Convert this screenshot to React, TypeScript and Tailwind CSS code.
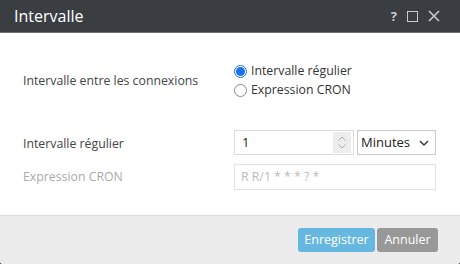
import React from "react";

export default function App() {
  return (
    <div
      className="w-[460px] h-[264px] bg-[#2f3236] flex flex-col overflow-hidden"
      style={{ fontFamily: '"Open Sans", "Noto Sans", sans-serif' }}
    >
      <div className="flex flex-col h-full rounded-b-[3px] overflow-hidden bg-white">
        {/* Header */}
        <div className="h-[32px] bg-[#3a3e43] flex items-center justify-between pl-[14px] pr-[20px] border-b border-[#6d7176] box-content">
          <span className="text-white text-[16px] leading-none">Intervalle</span>
          <div className="flex items-center gap-[10px] text-[#c8cacc]">
            <span className="text-[13px] font-bold leading-none">?</span>
            <div className="w-[11px] h-[11px] border-[1.5px] border-[#c8cacc]" />
            <svg width="12" height="12" viewBox="0 0 12 12">
              <path d="M1 1 L11 11 M11 1 L1 11" stroke="#c8cacc" strokeWidth="1.6" />
            </svg>
          </div>
        </div>

        {/* Body */}
        <div className="flex-1 bg-white pl-[23px] pr-[24px] pt-[29px] text-[12.3px]">
          <div className="flex items-center">
            <div className="w-[211px] text-[#444] pt-[2px]">Intervalle entre les connexions</div>
            <div className="flex flex-col gap-[1px]">
              <label className="flex items-center gap-[4px] text-[#333] h-[18px]">
                <span className="w-[13px] h-[13px] rounded-full border border-[#1a73e8] flex items-center justify-center">
                  <span className="w-[9px] h-[9px] rounded-full bg-[#1a73e8]" />
                </span>
                Intervalle régulier
              </label>
              <label className="flex items-center gap-[4px] text-[#333] h-[18px]">
                <span className="w-[13px] h-[13px] rounded-full border border-[#8a8a8a]" />
                Expression CRON
              </label>
            </div>
          </div>

          <div className="flex items-center mt-[31px]">
            <div className="w-[211px] text-[#444] pt-[4px]">Intervalle régulier</div>
            <div className="flex gap-[3px]">
              <div className="w-[120px] h-[25px] border border-[#dcdcdc] flex items-center justify-between pl-[7px] pr-[2px]">
                <span className="text-[#222] text-[13px]">1</span>
                <div className="w-[18px] h-[21px] bg-[#ededed] flex flex-col items-center justify-center gap-[3px]">
                  <svg width="8" height="5" viewBox="0 0 8 5">
                    <path d="M0.5 4.5 L4 1 L7.5 4.5" stroke="#aaa" strokeWidth="1" fill="none" />
                  </svg>
                  <svg width="8" height="5" viewBox="0 0 8 5">
                    <path d="M0.5 0.5 L4 4 L7.5 0.5" stroke="#aaa" strokeWidth="1" fill="none" />
                  </svg>
                </div>
              </div>
              <div className="w-[79px] h-[25px] border border-[#c9c9c9] flex items-center justify-between pl-[3px] pr-[6px]">
                <span className="text-[#222] text-[13px]">Minutes</span>
                <svg width="10" height="6" viewBox="0 0 10 6">
                  <path d="M1 1 L5 5 L9 1" stroke="#333" strokeWidth="1.4" fill="none" />
                </svg>
              </div>
            </div>
          </div>

          <div className="flex items-center mt-[9px]">
            <div className="w-[211px] text-[#aaa] pt-[1px]">Expression CRON</div>
            <div className="w-[202px] h-[26px] border border-[#e2e2e2] flex items-center pl-[6px] text-[#bbb]">
              R R/1 * * * ? *
            </div>
          </div>
        </div>

        {/* Footer */}
        <div className="h-[49px] bg-[#ececec] border-t border-[#dedede] flex items-start justify-end pt-[12px] pr-[22px] gap-[2px]">
          <button className="w-[77px] h-[24px] rounded-[3px] bg-[#66b8e0] text-white text-[12.5px]">
            Enregistrer
          </button>
          <button className="w-[61px] h-[24px] rounded-[3px] bg-[#989898] text-white text-[12.5px]">
            Annuler
          </button>
        </div>
      </div>
    </div>
  );
}
